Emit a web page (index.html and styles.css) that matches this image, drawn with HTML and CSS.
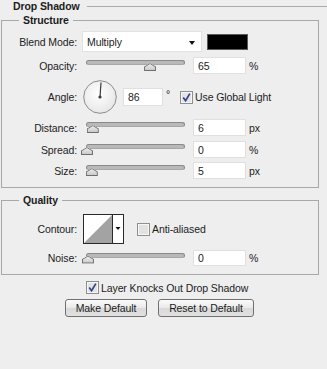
FILE: index.html
```html
<!DOCTYPE html>
<html lang="en">

    <head>
        <meta charset="UTF-8">
        <title>Drop Shadow</title>
        <link rel="stylesheet" href="styles.css">
    </head>

    <body>
        <div class="panel">
            <div class="heading">Drop Shadow</div>

            <fieldset class="group group-structure">
                <legend>Structure</legend>

                <div class="row row-blend">
                    <span class="label">Blend Mode:</span>
                    <div class="select">Multiply<span class="caret"></span></div>
                    <div class="swatch"></div>
                </div>

                <div class="row row-slider row-opacity">
                    <span class="label">Opacity:</span>
                    <div class="slider"><span class="thumb" style="left: 65%"></span></div>
                    <input class="num" type="text" value="65">
                    <span class="unit">%</span>
                </div>

                <div class="row row-angle">
                    <span class="label">Angle:</span>
                    <svg class="dial" width="34" height="34" viewBox="0 0 34 34">
                        <defs>
                            <radialGradient id="dialFill" cx="0.45" cy="0.4" r="0.7">
                                <stop offset="0" stop-color="#ffffff" />
                                <stop offset="1" stop-color="#e3e3e3" />
                            </radialGradient>
                        </defs>
                        <circle cx="17" cy="17" r="16.3" fill="url(#dialFill)" stroke="#8c8c8c" stroke-width="1" />
                        <line x1="17" y1="17" x2="18" y2="2.5" stroke="#3a3a3a" stroke-width="1.2" />
                        <circle cx="17" cy="17" r="1.6" fill="#3a3a3a" />
                    </svg>
                    <input class="num num-angle" type="text" value="86">
                    <span class="degree">&deg;</span>
                    <svg class="check check-global" width="13" height="13" viewBox="0 0 13 13">
                        <rect x="0.5" y="0.5" width="12" height="12" fill="#f6f6f6" stroke="#8e8f8f" />
                        <rect x="2" y="2" width="9" height="9" fill="#e4e4e4" />
                        <path d="M3.2 6.4 L5.6 9.8 L9.8 2.6" fill="none" stroke="#34438a" stroke-width="1.7" />
                    </svg>
                    <span class="check-text">Use Global Light</span>
                </div>

                <div class="row row-slider row-distance">
                    <span class="label">Distance:</span>
                    <div class="slider"><span class="thumb" style="left: 6%"></span></div>
                    <input class="num" type="text" value="6">
                    <span class="unit">px</span>
                </div>

                <div class="row row-slider row-spread">
                    <span class="label">Spread:</span>
                    <div class="slider"><span class="thumb" style="left: 0%"></span></div>
                    <input class="num" type="text" value="0">
                    <span class="unit">%</span>
                </div>

                <div class="row row-slider row-size">
                    <span class="label">Size:</span>
                    <div class="slider"><span class="thumb" style="left: 5%"></span></div>
                    <input class="num" type="text" value="5">
                    <span class="unit">px</span>
                </div>
            </fieldset>

            <fieldset class="group group-quality">
                <legend>Quality</legend>

                <div class="row row-contour">
                    <span class="label">Contour:</span>
                    <svg class="contour" width="41" height="30" viewBox="0 0 41 30">
                        <rect x="0.5" y="0.5" width="40" height="29" fill="#ffffff" stroke="#2a2a2a" />
                        <polygon points="1,29 29,1 29,29" fill="#a3a3a3" />
                        <line x1="29.5" y1="0.5" x2="29.5" y2="29.5" stroke="#2a2a2a" />
                        <path d="M32.5 13 H37.5 L35 16 Z" fill="#111111" />
                    </svg>
                    <svg class="check check-anti" width="13" height="13" viewBox="0 0 13 13">
                        <rect x="0.5" y="0.5" width="12" height="12" fill="#f6f6f6" stroke="#8e8f8f" />
                        <rect x="2" y="2" width="9" height="9" fill="#e2e2e2" />
                    </svg>
                    <span class="check-text">Anti-aliased</span>
                </div>

                <div class="row row-slider row-noise">
                    <span class="label">Noise:</span>
                    <div class="slider"><span class="thumb" style="left: 1%"></span></div>
                    <input class="num" type="text" value="0">
                    <span class="unit">%</span>
                </div>
            </fieldset>

            <div class="knockout">
                <svg class="check" width="13" height="13" viewBox="0 0 13 13">
                    <rect x="0.5" y="0.5" width="12" height="12" fill="#f6f6f6" stroke="#8e8f8f" />
                    <rect x="2" y="2" width="9" height="9" fill="#e4e4e4" />
                    <path d="M3.2 6.4 L5.6 9.8 L9.8 2.6" fill="none" stroke="#34438a" stroke-width="1.7" />
                </svg>
                <span class="check-text">Layer Knocks Out Drop Shadow</span>
            </div>

            <div class="buttons">
                <button class="btn btn-make">Make Default</button>
                <button class="btn btn-reset">Reset to Default</button>
            </div>
        </div>
    </body>

</html>
```

FILE: styles.css
```css
* {
    margin: 0;
    padding: 0;
    box-sizing: border-box;
}

body {
    background-color: #eeeeee;
    font-family: 'Liberation Sans', Arial, sans-serif;
    font-size: 10.5px;
    letter-spacing: -0.1px;
    color: #1c1c1c;
    width: 327px;
    height: 369px;
    overflow: hidden;
}

.heading {
    display: flex;
    align-items: center;
    height: 12px;
    padding-left: 13px;
    font-weight: bold;
}

.heading::after {
    content: "";
    flex: 1;
    border-top: 1px solid #ababab;
    margin-left: 7px;
}

.group {
    border: 1px solid #a8a8a8;
    margin: 0 8px 0 1px;
    padding: 0 0 8px 0;
}

.group legend {
    margin-left: 17px;
    padding: 0 4px;
    font-weight: bold;
    line-height: 13px;
}

.group-structure {
    margin-top: 2px;
}

.group-quality {
    margin-top: 6px;
}

.row {
    display: flex;
    align-items: center;
}

.label {
    width: 75px;
    text-align: right;
    color: #222222;
}

/* blend mode */
.row-blend {
    margin-top: 4px;
    height: 21px;
}

.select {
    position: relative;
    width: 120px;
    height: 21px;
    margin-left: 5px;
    padding: 4px 0 0 4px;
    background-color: #ffffff;
    border: 1px solid #e2e2e2;
}

.caret {
    position: absolute;
    right: 6px;
    top: 9px;
    border-left: 3.5px solid transparent;
    border-right: 3.5px solid transparent;
    border-top: 4px solid #111111;
}

.swatch {
    width: 41px;
    height: 16px;
    margin-left: 5px;
    background-color: #000000;
    border: 1px solid #5a5a5a;
}

/* sliders */
.row-slider {
    height: 17px;
}

.row-opacity {
    margin-top: 5px;
}

.row-distance {
    margin-top: 5px;
}

.row-spread {
    margin-top: 5px;
}

.row-size {
    margin-top: 4px;
}

.slider {
    position: relative;
    width: 99px;
    height: 5px;
    margin-left: 9px;
    margin-top: -6px;
    background-color: #b9b9b9;
    border: 1px solid #8a8a8a;
    border-bottom-color: #a8a8a8;
    border-radius: 3px;
}

.thumb {
    position: absolute;
    top: 2px;
    width: 12px;
    height: 8px;
    margin-left: -6px;
    background: linear-gradient(#f2f2f2, #c4c4c4);
    clip-path: polygon(0 45%, 50% 0, 100% 45%, 100% 100%, 0 100%);
}

.thumb::before {
    content: "";
    position: absolute;
    inset: 0;
    background: #6e6e6e;
    clip-path: polygon(0 45%, 50% 0, 100% 45%, 100% 100%, 0 100%, 0 45%, 1px 50%, 1px calc(100% - 1px), calc(100% - 1px) calc(100% - 1px), calc(100% - 1px) 50%, 50% 13%, 1px 50%);
}

.num {
    width: 53px;
    height: 17px;
    margin-left: 8px;
    padding-left: 4px;
    font-family: inherit;
    font-size: 10.5px;
    color: #1c1c1c;
    background-color: #ffffff;
    border: 1px solid #e0e0e0;
    outline: none;
}

.unit {
    margin-left: 3px;
}

/* angle */
.row-angle {
    margin-top: 6px;
    height: 34px;
}

.dial {
    margin-left: 6px;
}

.num-angle {
    width: 40px;
    height: 18px;
    margin-left: 6px;
}

.degree {
    margin-left: 3px;
    margin-top: -6px;
}

.check-global {
    margin-left: 10px;
}

.check-text {
    margin-left: 2px;
}

/* quality */
.row-contour {
    margin-top: 7px;
    height: 30px;
}

.contour {
    margin-left: 6px;
}

.check-anti {
    margin-left: 13px;
}

.row-noise {
    margin-top: 6px;
    height: 16px;
}

.row-noise .num {
    height: 16px;
}

/* bottom */
.knockout {
    display: flex;
    align-items: center;
    height: 13px;
    margin-top: 6px;
    padding-left: 86px;
}

.buttons {
    display: flex;
    margin-top: 5px;
    padding-left: 65px;
}

.btn {
    height: 18px;
    font-family: inherit;
    font-size: 10.5px;
    letter-spacing: -0.1px;
    color: #1c1c1c;
    background: linear-gradient(#fbfbfb, #e9e9e9 50%, #d9d9d9 51%, #e1e1e1);
    border: 1px solid #707070;
    border-radius: 3px;
}

.btn-make {
    width: 82px;
}

.btn-reset {
    width: 96px;
    margin-left: 11px;
}
```
